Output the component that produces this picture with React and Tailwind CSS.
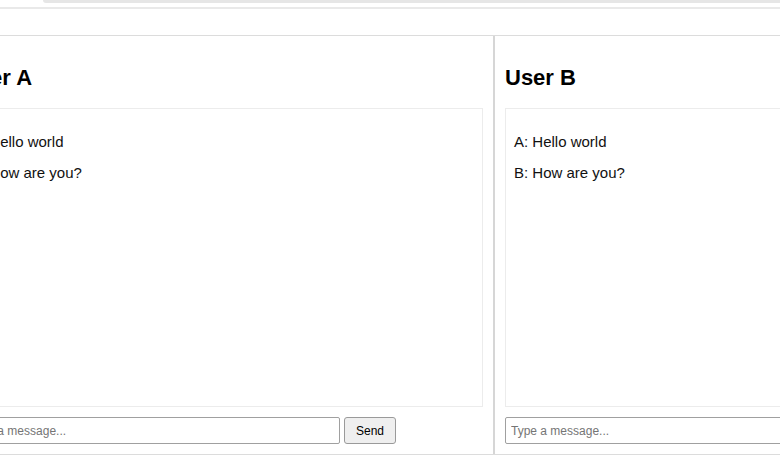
export default function App() {
  const Panel = ({ title, border }) => (
    <div
      className={
        "shrink-0 px-[10px] pt-[29px] pb-[10px] flex flex-col " +
        (border ? "w-[543px] border-r-2 border-[#d6d6d6]" : "w-[540px]")
      }
    >
      <h2 className="text-[22px] leading-[25px] font-bold text-black">{title}</h2>
      <div className="mt-[18px] h-[299px] border border-[#ececec] pl-[8px] pt-[24px] flex flex-col gap-[14px] text-[15px] leading-[17px] text-[#111]">
        <div>A: Hello world</div>
        <div>B: How are you?</div>
      </div>
      <div className="mt-[10px] flex items-center">
        <input
          className="w-[378px] h-[27px] border border-[#a0a0a0] rounded-[2px] px-[5px] text-[12px] text-black placeholder:text-[#757575] outline-none bg-white"
          placeholder="Type a message..."
        />
        <button className="ml-[4px] w-[52px] h-[27px] bg-[#efefef] border border-[#9a9a9a] rounded-[3px] text-[12px] text-black">
          Send
        </button>
      </div>
    </div>
  );

  return (
    <div className="w-[780px] h-[470px] overflow-hidden bg-white font-['Liberation_Sans',Arial,sans-serif]">
      <div className="h-[3px] ml-[43px] bg-[#e6e6e6] rounded-bl-[10px]" />
      <div className="mt-[4px] h-[2px] bg-[#e9e9e9]" />
      <div className="h-[26px]" />
      <div className="flex ml-[-48px] border-y border-[#dcdcdc]">
        <Panel title="User A" border />
        <Panel title="User B" />
      </div>
    </div>
  );
}
